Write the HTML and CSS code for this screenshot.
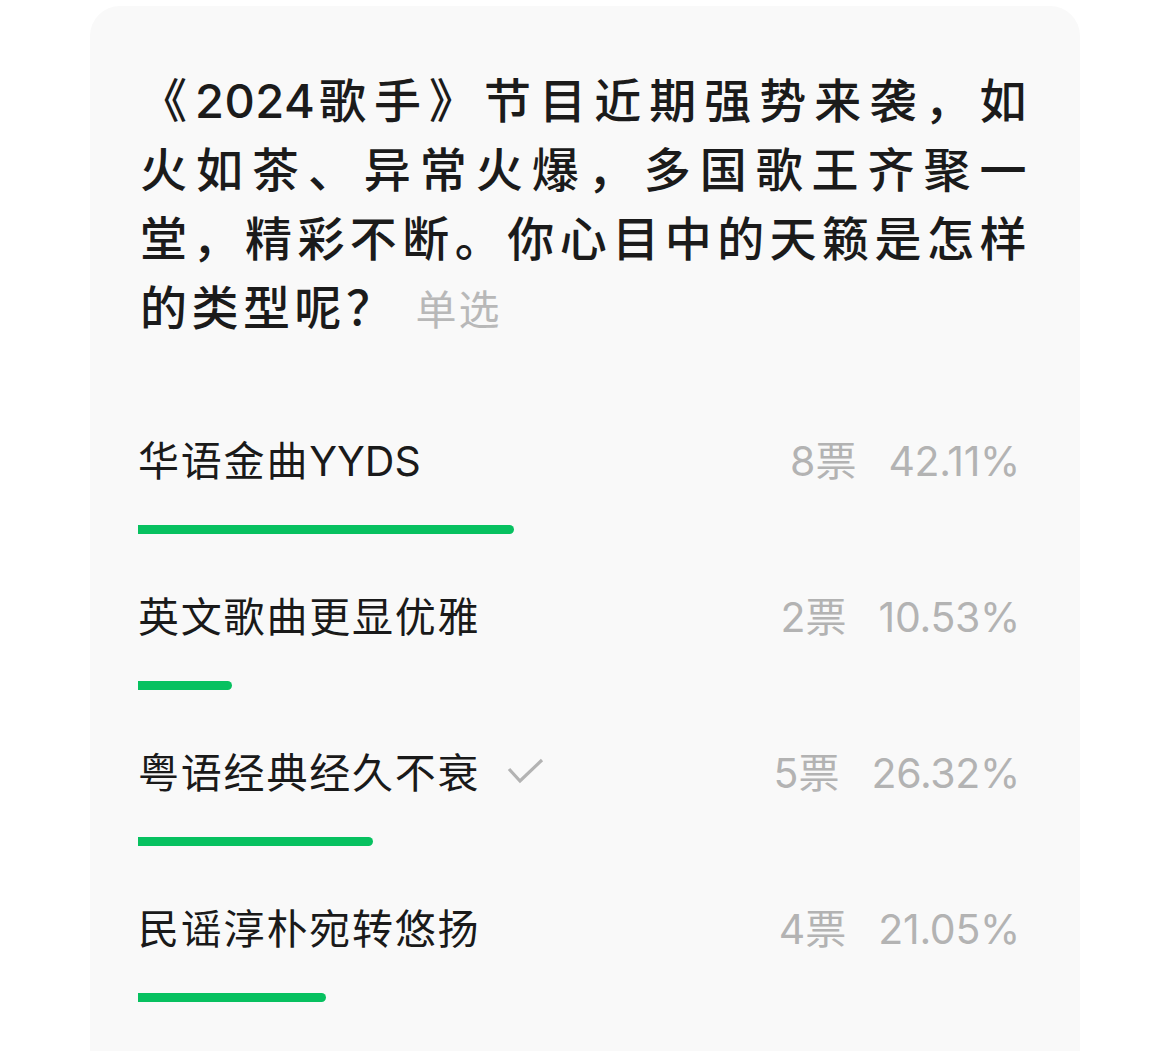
FILE: index.html
```html
<!DOCTYPE html>
<html lang="zh-CN">
<head>
    <meta charset="UTF-8">
    <meta name="viewport" content="width=device-width, initial-scale=1.0">
    <title>投票</title>
    <link rel="stylesheet" href="styles.css">
</head>
<body>

    <div class="vote-card">
        <h2 class="vote-title">
            <span class="title-line">《<span class="num">2024</span>歌手》节目近期强势来袭，如</span>
            <span class="title-line">火如茶、异常火爆，多国歌王齐聚一</span>
            <span class="title-line">堂，精彩不断。你心目中的天籁是怎样</span>
            <span class="title-line last">的类型呢？<span class="vote-type">单选</span></span>
        </h2>

        <ul class="option-list">
            <li class="option">
                <div class="option-head">
                    <span class="option-label">华语金曲<span class="latin">YYDS</span></span>
                    <span class="option-stats"><span class="votes">8票</span><span class="percent">42.11%</span></span>
                </div>
                <div class="bar-track"><div class="bar" style="width: 42.11%"></div></div>
            </li>
            <li class="option">
                <div class="option-head">
                    <span class="option-label">英文歌曲更显优雅</span>
                    <span class="option-stats"><span class="votes">2票</span><span class="percent">10.53%</span></span>
                </div>
                <div class="bar-track"><div class="bar" style="width: 10.53%"></div></div>
            </li>
            <li class="option">
                <div class="option-head">
                    <span class="option-label">粤语经典经久不衰
                        <svg class="check" width="40" height="30" viewBox="0 0 40 30">
                            <polyline points="4,11 15,23 37,2" fill="none" stroke="#b3b3b3" stroke-width="3.2"/>
                        </svg>
                    </span>
                    <span class="option-stats"><span class="votes">5票</span><span class="percent">26.32%</span></span>
                </div>
                <div class="bar-track"><div class="bar" style="width: 26.32%"></div></div>
            </li>
            <li class="option">
                <div class="option-head">
                    <span class="option-label">民谣淳朴宛转悠扬</span>
                    <span class="option-stats"><span class="votes">4票</span><span class="percent">21.05%</span></span>
                </div>
                <div class="bar-track"><div class="bar" style="width: 21.05%"></div></div>
            </li>
        </ul>
    </div>

</body>
</html>
```

FILE: styles.css
```css
body {
    margin: 0;
    background-color: #ffffff;
    font-family: "Inter", "Noto Sans CJK SC", sans-serif;
    color: #1a1a1a;
}

.vote-card {
    width: 990px;
    min-height: 1120px;
    margin: 6px 0 0 90px;
    padding: 60px 49px 0 48px;
    box-sizing: border-box;
    background-color: #f9f9f9;
    border-radius: 30px;
}

.vote-title {
    margin: 0;
    font-size: 47px;
    font-weight: 500;
    line-height: 69px;
    letter-spacing: 4.5px;
    color: #1b1b1b;
}

.title-line {
    display: block;
    padding-left: 2px;
    text-align: justify;
    text-align-last: justify;
}

.title-line.last {
    text-align-last: left;
}

.num {
    letter-spacing: 0.5px;
}

.vote-type {
    margin-left: 18px;
    font-size: 41px;
    font-weight: 400;
    letter-spacing: 2px;
    color: #b8b8b8;
}

.option-list {
    list-style-type: none;
    margin: 91px 0 0;
    padding: 0;
}

.option {
    margin-bottom: 58px;
}

.option-head {
    display: flex;
    justify-content: space-between;
    align-items: center;
    height: 50px;
    padding-right: 11px;
    font-size: 41px;
    line-height: 50px;
}

.option-label {
    display: flex;
    align-items: center;
    letter-spacing: 1.8px;
    color: #1a1a1a;
}

.latin {
    letter-spacing: 0;
}

.check {
    margin-left: 25px;
}

.option-stats {
    display: flex;
    gap: 32px;
    color: #b3b3b3;
}

.percent {
    letter-spacing: -0.3px;
}

.bar-track {
    margin-top: 39px;
    height: 9px;
}

.bar {
    height: 100%;
    background-color: #07c160;
    border-radius: 0 5px 5px 0;
}
```
